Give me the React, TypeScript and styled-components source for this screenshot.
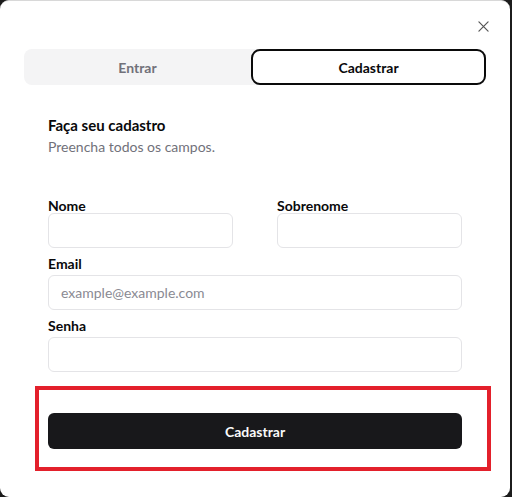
import React from "react";
import styled, { createGlobalStyle } from "styled-components";

const Global = createGlobalStyle`
  html, body { margin: 0; padding: 0; background: #1c1c1c; }
  body { font-family: Lato, "Noto Sans", sans-serif; color: #09090b; }
  * { box-sizing: border-box; }
`;

const Dialog = styled.div`
  position: relative;
  width: 510px;
  height: 497px;
  background: #ffffff;
  border-radius: 9px;
  border-top: 1px solid #d8d8d8;
  padding: 48px 24px 0 24px;
  display: flex;
  flex-direction: column;
`;

const Close = styled.button`
  position: absolute;
  top: 18px;
  right: 20px;
  width: 14px;
  height: 14px;
  padding: 0;
  border: none;
  background: none;
  color: #555;
  display: flex;
  align-items: center;
  justify-content: center;
`;

const Tabs = styled.div`
  display: grid;
  grid-template-columns: 227px 1fr;
  height: 36px;
  background: #f4f4f5;
  border-radius: 8px;
`;

const Tab = styled.div<{ $active?: boolean }>`
  display: flex;
  align-items: center;
  justify-content: center;
  font-size: 14px;
  font-weight: 700;
  border-radius: 9px;
  color: ${(p) => (p.$active ? "#09090b" : "#71717a")};
  background: ${(p) => (p.$active ? "#ffffff" : "transparent")};
  border: ${(p) => (p.$active ? "2px solid #0a0a0a" : "none")};
`;

const Card = styled.div`
  padding: 29px 24px 0 24px;
  display: flex;
  flex-direction: column;
`;

const Title = styled.h2`
  margin: 0;
  font-size: 15px;
  font-weight: 700;
  line-height: 22px;
  color: #09090b;
`;

const Sub = styled.p`
  margin: 1px 0 0 0;
  font-size: 14px;
  line-height: 20px;
  color: #71717a;
`;

const Form = styled.div`
  margin-top: 41px;
  display: flex;
  flex-direction: column;
  gap: 8px;
`;

const Row = styled.div`
  display: grid;
  grid-template-columns: 185px 185px;
  justify-content: space-between;
`;

const Field = styled.div`
  display: flex;
  flex-direction: column;
`;

const Label = styled.label<{ $spaced?: boolean }>`
  font-size: 14px;
  font-weight: 700;
  line-height: 15px;
  color: #09090b;
  margin-bottom: ${(p) => (p.$spaced ? "4px" : "0")};
`;

const Input = styled.input`
  height: 35px;
  width: 100%;
  border: 1px solid #e4e4e7;
  border-radius: 6px;
  padding: 0 12px;
  font-family: Lato, "Noto Sans", sans-serif;
  font-size: 14px;
  background: #fff;
  outline: none;
  &::placeholder { color: #8a8a93; }
`;

const Highlight = styled.div`
  margin: 14px -29px 0 -13px;
  border: 4px solid #e3202b;
  padding: 23px 25px 18px 9px;
`;

const Submit = styled.button`
  width: 100%;
  height: 36px;
  border: none;
  border-radius: 6px;
  background: #18181b;
  color: #fafafa;
  font-family: Lato, "Noto Sans", sans-serif;
  font-size: 14px;
  font-weight: 700;
`;

export default function App() {
  return (
    <>
      <Global />
      <Dialog>
        <Close aria-label="Fechar">
          <svg width="11" height="11" viewBox="0 0 12 12" fill="none" stroke="currentColor" strokeWidth="1.3" strokeLinecap="round">
            <path d="M1 1L11 11M11 1L1 11" />
          </svg>
        </Close>
        <Tabs>
          <Tab>Entrar</Tab>
          <Tab $active>Cadastrar</Tab>
        </Tabs>
        <Card>
          <Title>Faça seu cadastro</Title>
          <Sub>Preencha todos os campos.</Sub>
          <Form>
            <Row>
              <Field>
                <Label>Nome</Label>
                <Input />
              </Field>
              <Field>
                <Label>Sobrenome</Label>
                <Input />
              </Field>
            </Row>
            <Field>
              <Label $spaced>Email</Label>
              <Input placeholder="example@example.com" />
            </Field>
            <Field>
              <Label $spaced>Senha</Label>
              <Input type="password" />
            </Field>
          </Form>
          <Highlight>
            <Submit>Cadastrar</Submit>
          </Highlight>
        </Card>
      </Dialog>
    </>
  );
}
